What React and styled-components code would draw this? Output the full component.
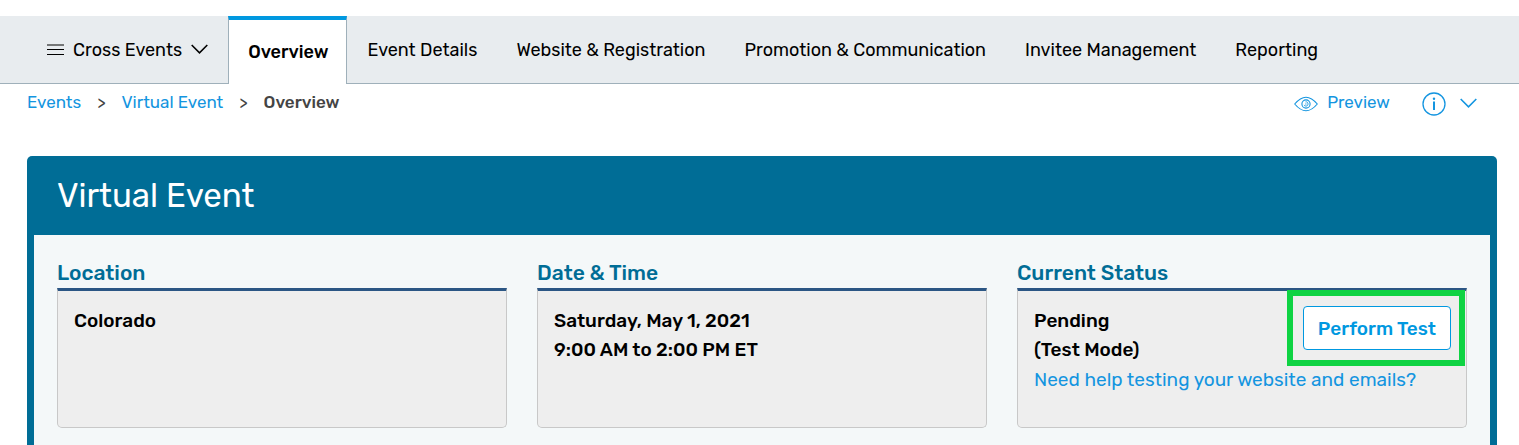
import styled, { createGlobalStyle } from "styled-components";

const GlobalStyle = createGlobalStyle`
  * {
    box-sizing: border-box;
  }

  body {
    margin: 0;
    background: #fff;
    color: #000;
    font-family: Rubik, Roboto, "Liberation Sans", sans-serif;
    font-size: 18px;
    line-height: 24px;
  }

  a {
    color: inherit;
    text-decoration: none;
  }
`;

const NavBar = styled.nav`
  display: flex;
  height: 68px;
  margin-top: 16px;
  padding-left: 28px;
  background: #e8ecef;
  box-shadow: inset 0 -1px #9fb0ba;
  white-space: nowrap;
`;

const MenuButton = styled.button`
  display: flex;
  align-items: center;
  gap: 9px;
  padding: 0 20px 0 19px;
  border: 0;
  background: none;
  color: inherit;
  font: inherit;
  cursor: pointer;

  svg:last-child {
    margin-bottom: 2px;
  }
`;

const Tab = styled.a`
  display: flex;
  align-items: center;
  padding: 0 19px 0 20px;
`;

const ActiveTab = styled(Tab)`
  padding: 0 18px 0 19px;
  border: 1px solid #9fb0ba;
  border-top: 4px solid #0098e0;
  border-bottom: 0;
  background: #fff;
  font-weight: 500;
`;

const SubHeader = styled.div`
  display: flex;
  align-items: flex-start;
  justify-content: space-between;
  height: 72px;
  padding: 6px 42px 0 27px;
  font-size: 17px;
`;

const Breadcrumbs = styled.nav`
  display: flex;
  align-items: center;
  gap: 16px;
  color: #444;

  a {
    color: #1495e0;
  }

  strong {
    font-weight: 500;
  }
`;

const Actions = styled.div`
  display: flex;
  align-items: flex-start;
  gap: 32px;
  color: #1495e0;
`;

const PreviewLink = styled.a`
  display: flex;
  align-items: center;
  gap: 9px;

  svg {
    margin-top: 4px;
  }
`;

const InfoButton = styled.button`
  display: flex;
  align-items: center;
  gap: 14px;
  padding: 2px 0 0;
  border: 0;
  background: none;
  color: inherit;
  cursor: pointer;

  svg:last-child {
    margin-bottom: 2px;
  }
`;

const Panel = styled.main`
  margin: 0 22px 0 27px;
  border: 7px solid #006d96;
  border-top: 0;
  border-bottom: 0;
  border-radius: 5px 5px 0 0;
  background: #f4f8f9;
`;

const PanelTitle = styled.h1`
  margin: 0;
  padding: 20px 23px 19px;
  background: #006d96;
  color: #fff;
  font-size: 33px;
  font-weight: 400;
  line-height: 40px;
`;

const Summary = styled.div`
  display: grid;
  grid-template-columns: repeat(3, 1fr);
  gap: 30px;
  padding: 26px 23px;
`;

const SectionTitle = styled.h2`
  margin: 0;
  padding-bottom: 3px;
  color: #006d96;
  font-size: 21px;
  font-weight: 500;
  line-height: 24px;
`;

const Card = styled.div`
  display: flex;
  flex-wrap: wrap;
  align-content: flex-start;
  justify-content: space-between;
  min-height: 140px;
  padding: 15px 15px 15px 16px;
  border: 1px solid #c8c8c8;
  border-top: 3px solid #2b5684;
  border-radius: 0 0 5px 5px;
  background: #eee;
  font-size: 19px;
  line-height: 29px;
`;

const Value = styled.p`
  margin: 0;
  font-weight: 500;
`;

const HelpLink = styled.a`
  flex-basis: 100%;
  margin-top: 1px;
  color: #1495e0;
`;

const TestButton = styled.button`
  position: relative;
  height: 44px;
  padding: 0 14px;
  border: 1px solid #0098e0;
  border-radius: 4px;
  background: #fff;
  color: #0098e0;
  font: inherit;
  font-weight: 500;
  cursor: pointer;

  /* callout frame around the button */
  &::after {
    content: "";
    position: absolute;
    inset: -17px -15px -17px -17px;
    border: 6px solid #0fd343;
    pointer-events: none;
  }
`;

const tabs = [
  "Event Details",
  "Website & Registration",
  "Promotion & Communication",
  "Invitee Management",
  "Reporting",
];

const MenuIcon = () => (
  <svg width="17" height="12" viewBox="0 0 17 12" stroke="currentColor" strokeWidth="1.2" aria-hidden="true">
    <path d="M0 1h17M0 5.5h17M0 10.5h17" />
  </svg>
);

const ChevronIcon = () => (
  <svg width="17" height="10" viewBox="0 0 17 10" fill="none" stroke="currentColor" strokeWidth="1.6" aria-hidden="true">
    <path d="M.7 1l7.8 7.8L16.3 1" />
  </svg>
);

const EyeIcon = () => (
  <svg width="24" height="16" viewBox="0 0 24 16" fill="none" stroke="currentColor" strokeWidth="1.1" aria-hidden="true">
    <path d="M.7 8C4.500 3.500 8 1.200 12 1.200S19.500 3.500 23.300 8C19.500 12.500 16 14.800 12 14.800S4.500 12.500.7 8z" />
    <circle cx="12" cy="8" r="4.100" />
    <path d="M11.500 5.900c1.500-.4 2.500.6 2.500 2s-.9 2.200-2.100 2.200c-1 0-1.600-.5-1.900-1.200M11.200 8h1.300" strokeWidth=".9" />
  </svg>
);

const InfoIcon = () => (
  <svg width="24" height="24" viewBox="0 0 24 24" fill="none" stroke="currentColor" aria-hidden="true">
    <circle cx="12" cy="12" r="11" strokeWidth="1.300" />
    <path d="M12 9.500v8.500" strokeWidth="2" />
    <circle cx="12" cy="6.700" r="1.200" fill="currentColor" stroke="none" />
  </svg>
);

const App = () => {
  return (
    <>
      <GlobalStyle />
      <NavBar>
        <MenuButton type="button">
          <MenuIcon />
          Cross Events
          <ChevronIcon />
        </MenuButton>
        <ActiveTab href="#overview" aria-current="page">Overview</ActiveTab>
        {tabs.map((tab) => (
          <Tab key={tab} href="#">{tab}</Tab>
        ))}
      </NavBar>

      <SubHeader>
        <Breadcrumbs aria-label="Breadcrumb">
          <a href="#events">Events</a>
          <span>&gt;</span>
          <a href="#event">Virtual Event</a>
          <span>&gt;</span>
          <strong>Overview</strong>
        </Breadcrumbs>
        <Actions>
          <PreviewLink href="#preview">
            <EyeIcon />
            Preview
          </PreviewLink>
          <InfoButton type="button" aria-label="Event information">
            <InfoIcon />
            <ChevronIcon />
          </InfoButton>
        </Actions>
      </SubHeader>

      <Panel>
        <PanelTitle>Virtual Event</PanelTitle>
        <Summary>
          <section>
            <SectionTitle>Location</SectionTitle>
            <Card>
              <Value>Colorado</Value>
            </Card>
          </section>
          <section>
            <SectionTitle>Date &amp; Time</SectionTitle>
            <Card>
              <Value>
                Saturday, May 1, 2021
                <br />
                9:00 AM to 2:00 PM ET
              </Value>
            </Card>
          </section>
          <section>
            <SectionTitle>Current Status</SectionTitle>
            <Card>
              <Value>
                Pending
                <br />
                (Test Mode)
              </Value>
              <TestButton type="button">Perform Test</TestButton>
              <HelpLink href="#help">Need help testing your website and emails?</HelpLink>
            </Card>
          </section>
        </Summary>
      </Panel>
    </>
  );
};

export default App;
